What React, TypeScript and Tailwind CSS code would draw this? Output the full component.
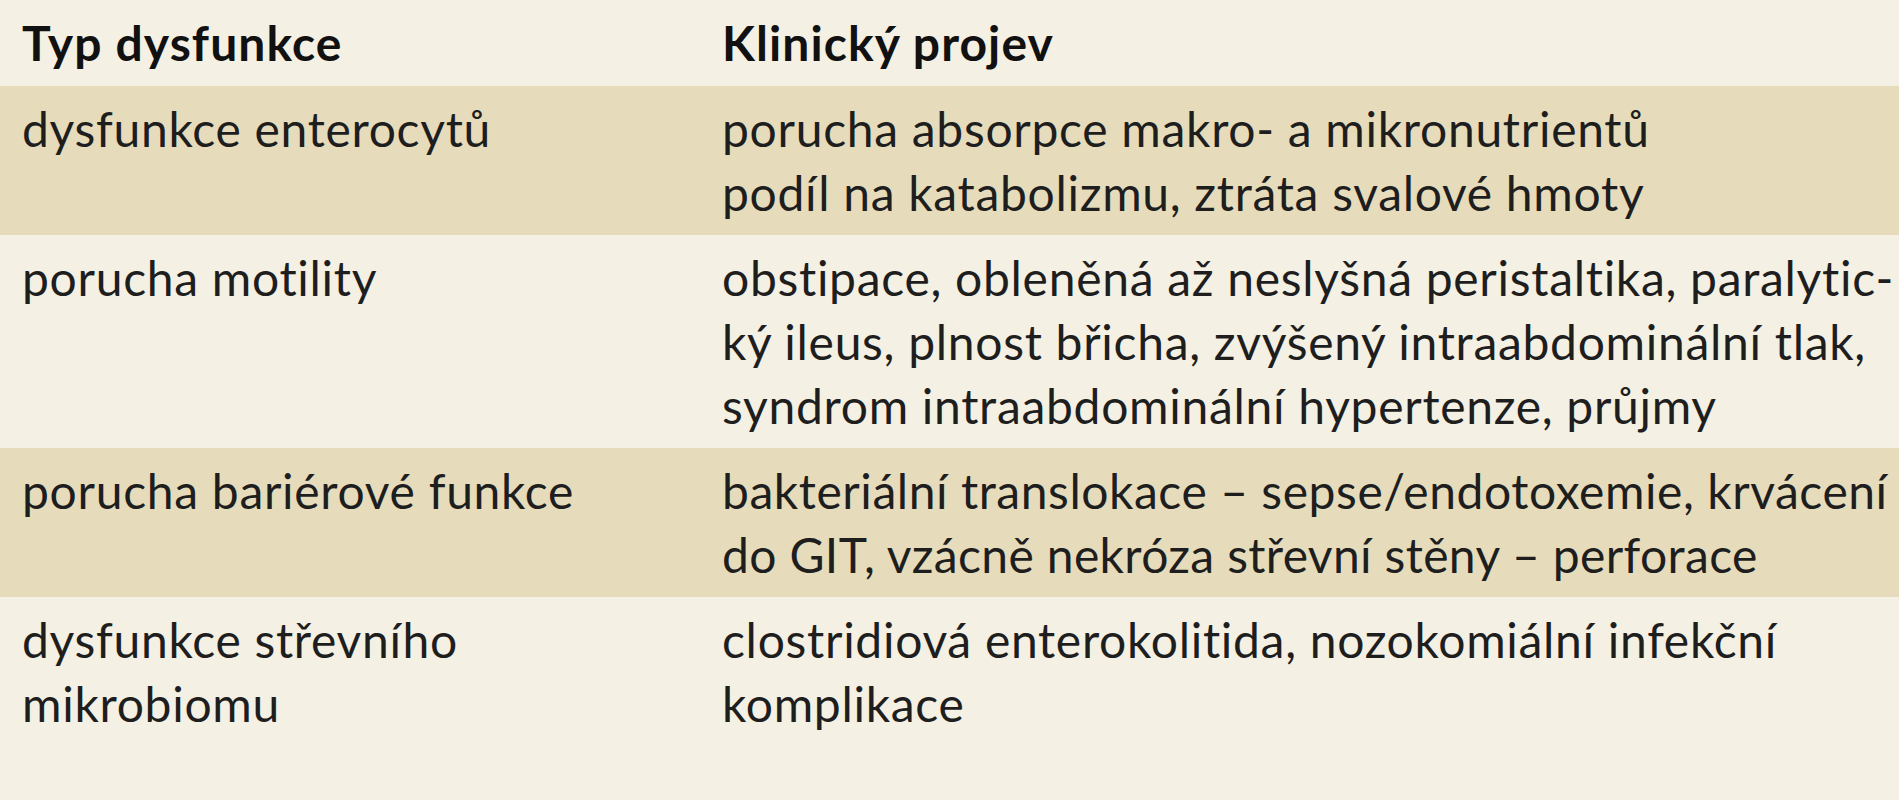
import React from "react";

type Line = { t: string; c?: string };

const rows: { left: Line[]; right: Line[]; shaded: boolean }[] = [
  {
    left: [{ t: "dysfunkce enterocytů" }],
    right: [
      { t: "porucha absorpce makro- a mikronutrientů" },
      { t: "podíl na katabolizmu, ztráta svalové hmoty" },
    ],
    shaded: true,
  },
  {
    left: [{ t: "porucha motility" }],
    right: [
      { t: "obstipace, obleněná až neslyšná peristaltika, paralytic-" },
      { t: "ký ileus, plnost břicha, zvýšený intraabdominální tlak," },
      { t: "syndrom intraabdominální hypertenze, průjmy" },
    ],
    shaded: false,
  },
  {
    left: [{ t: "porucha bariérové funkce" }],
    right: [
      { t: "bakteriální translokace – sepse/endotoxemie, krvácení", c: "tracking-[0.55px]" },
      { t: "do GIT, vzácně nekróza střevní stěny – perforace", c: "tracking-[0.35px]" },
    ],
    shaded: true,
  },
  {
    left: [{ t: "dysfunkce střevního" }, { t: "mikrobiomu" }],
    right: [
      { t: "clostridiová enterokolitida, nozokomiální infekční" },
      { t: "komplikace" },
    ],
    shaded: false,
  },
];

function Lines({ lines }: { lines: Line[] }) {
  return (
    <div className="flex flex-col">
      {lines.map((l, i) => (
        <span key={i} className={"whitespace-nowrap " + (l.c ?? "")}>
          {l.t}
        </span>
      ))}
    </div>
  );
}

export default function App() {
  return (
    <div
      className="min-h-screen w-full bg-[#f4f0e3] text-[#1e1e1e] text-[48px] leading-[64px] tracking-[0.7px]"
      style={{ fontFamily: "Lato, 'Open Sans', 'Noto Sans', sans-serif" }}
    >
      <div className="grid grid-cols-[700px_1fr] pt-[11px] pb-[11px] font-bold text-[#111] tracking-[1.1px]">
        <div className="pl-[22px]">Typ dysfunkce</div>
        <div className="pl-[22px]">Klinický projev</div>
      </div>
      {rows.map((r, i) => (
        <div
          key={i}
          className={
            "grid grid-cols-[700px_1fr] pt-[11px] pb-[10px] " +
            (r.shaded ? "bg-[#e6dcbb]" : "bg-[#f4f0e3]")
          }
        >
          <div className="pl-[22px]">
            <Lines lines={r.left} />
          </div>
          <div className="pl-[22px]">
            <Lines lines={r.right} />
          </div>
        </div>
      ))}
    </div>
  );
}
